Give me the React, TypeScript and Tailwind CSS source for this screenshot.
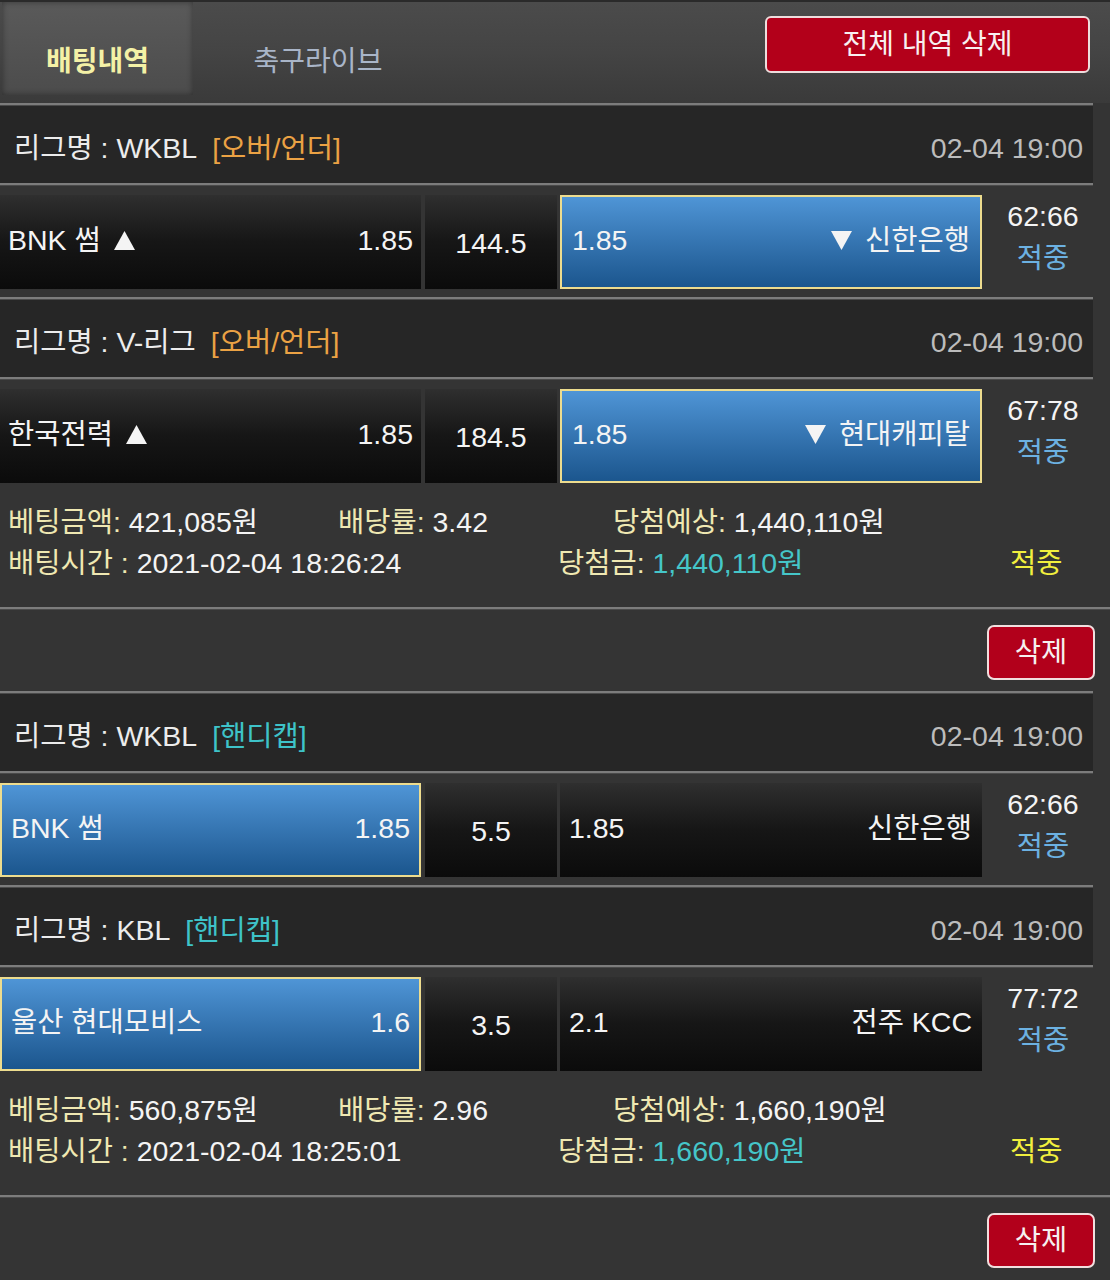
import React from "react";

type Game = {
  league: string;
  type: string;
  typeColor: string;
  date: string;
  home: string;
  homeMark?: boolean;
  homeOdds: string;
  line: string;
  awayOdds: string;
  away: string;
  awayMark?: boolean;
  pick: "home" | "away";
  score: string;
};

type Bet = {
  games: Game[];
  amount: string;
  rate: string;
  expected: string;
  time: string;
  win: string;
};

const bets: Bet[] = [
  {
    games: [
      {
        league: "WKBL",
        type: "[오버/언더]",
        typeColor: "text-[#eba244]",
        date: "02-04 19:00",
        home: "BNK 썸",
        homeMark: true,
        homeOdds: "1.85",
        line: "144.5",
        awayOdds: "1.85",
        away: "신한은행",
        awayMark: true,
        pick: "away",
        score: "62:66",
      },
      {
        league: "V-리그",
        type: "[오버/언더]",
        typeColor: "text-[#eba244]",
        date: "02-04 19:00",
        home: "한국전력",
        homeMark: true,
        homeOdds: "1.85",
        line: "184.5",
        awayOdds: "1.85",
        away: "현대캐피탈",
        awayMark: true,
        pick: "away",
        score: "67:78",
      },
    ],
    amount: "421,085원",
    rate: "3.42",
    expected: "1,440,110원",
    time: "2021-02-04 18:26:24",
    win: "1,440,110원",
  },
  {
    games: [
      {
        league: "WKBL",
        type: "[핸디캡]",
        typeColor: "text-[#3ec3c9]",
        date: "02-04 19:00",
        home: "BNK 썸",
        homeOdds: "1.85",
        line: "5.5",
        awayOdds: "1.85",
        away: "신한은행",
        pick: "home",
        score: "62:66",
      },
      {
        league: "KBL",
        type: "[핸디캡]",
        typeColor: "text-[#3ec3c9]",
        date: "02-04 19:00",
        home: "울산 현대모비스",
        homeOdds: "1.6",
        line: "3.5",
        awayOdds: "2.1",
        away: "전주 KCC",
        pick: "home",
        score: "77:72",
      },
    ],
    amount: "560,875원",
    rate: "2.96",
    expected: "1,660,190원",
    time: "2021-02-04 18:25:01",
    win: "1,660,190원",
  },
];

const dark = "bg-linear-to-b from-[#2f2f2f] via-[#161616] to-[#0b0b0b]";
const blue = "bg-linear-to-b from-[#4f95d6] to-[#1b568e] border-2 border-[#eddc8e]";

function Tri({ down }: { down?: boolean }) {
  return (
    <svg width="21" height="19" viewBox="0 0 21 19" className="shrink-0">
      <path d={down ? "M0 0H21L10.5 19Z" : "M10.5 0L21 19H0Z"} fill="#f4f4f4" />
    </svg>
  );
}

function Divider() {
  return <div className="h-[3px] w-[1093px] bg-[#7c7c7c] border-b border-[#4a4a4a]" />;
}

function GameRows({ game }: { game: Game }) {
  const homeSel = game.pick === "home";
  return (
    <>
      <Divider />
      <div className="flex h-[77px] w-[1093px] items-center justify-between bg-[#262626] pl-[14px] pr-[10px] pt-[8px]">
        <div className="flex items-center">
          <span className="text-[#ececec]">리그명 : {game.league}</span>
          <span className={`ml-[15px] ${game.typeColor}`}>{game.type}</span>
        </div>
        <span className="text-[#bcbcbc]">{game.date}</span>
      </div>
      <Divider />
      <div className="flex w-[1093px] bg-[#343434] pt-[9px] pb-[8px]">
        <div
          className={`flex h-[94px] w-[421px] items-center justify-between pb-[3px] ${
            homeSel ? `${blue} pl-[9px] pr-[9px]` : `${dark} pl-[8px] pr-[8px]`
          }`}
        >
          <span className="flex items-center gap-[13px]">
            <span>{game.home}</span>
            {game.homeMark && <Tri />}
          </span>
          <span>{game.homeOdds}</span>
        </div>
        <div className={`ml-[4px] flex h-[94px] w-[132px] items-center justify-center pt-[2px] ${dark}`}>
          {game.line}
        </div>
        <div
          className={`ml-[3px] flex h-[94px] w-[422px] items-center justify-between pb-[3px] ${
            homeSel ? `${dark} pl-[9px] pr-[10px]` : `${blue} pl-[10px] pr-[10px]`
          }`}
        >
          <span>{game.awayOdds}</span>
          <span className="flex items-center gap-[13px]">
            {game.awayMark && <Tri down />}
            <span>{game.away}</span>
          </span>
        </div>
        <div className="flex w-[111px] flex-col items-center pl-[11px] leading-[42px]">
          <span>{game.score}</span>
          <span className="text-[#6cb1e2]">적중</span>
        </div>
      </div>
    </>
  );
}

function BetBlock({ bet }: { bet: Bet }) {
  const label = "text-[#efe8b2]";
  return (
    <div>
      {bet.games.map((g, i) => (
        <GameRows key={i} game={g} />
      ))}
      <div className="pt-[11px] pb-[23px] pl-[8px] leading-[41px]">
        <div className="flex">
          <div className="w-[330px]">
            <span className={label}>베팅금액:</span> {bet.amount}
          </div>
          <div className="w-[275px]">
            <span className={label}>배당률:</span> {bet.rate}
          </div>
          <div>
            <span className={label}>당첨예상:</span> {bet.expected}
          </div>
        </div>
        <div className="flex">
          <div className="w-[550px]">
            <span className={label}>배팅시간 :</span> {bet.time}
          </div>
          <div className="w-[452px]">
            <span className={label}>당첨금:</span>{" "}
            <span className="text-[#45c6c9]">{bet.win}</span>
          </div>
          <div className="text-[#f1ef3e]">적중</div>
        </div>
      </div>
      <div className="h-[3px] w-full bg-[#7c7c7c] border-b border-[#4a4a4a]" />
      <div className="flex h-[81px] justify-end pt-[15px] pr-[15px]">
        <button className="h-[55px] w-[108px] rounded-[7px] border-2 border-[#f1dede] bg-[#b2001b] text-[#f6f0f0] leading-none">
          삭제
        </button>
      </div>
    </div>
  );
}

export default function App() {
  return (
    <div className="min-h-[1280px] w-[1110px] overflow-hidden bg-[#343434] text-[28.5px] text-[#f4f4f4] font-[family-name:'Liberation_Sans','Noto_Sans_CJK_KR',sans-serif]">
      <div className="h-[103px] border-t-2 border-[#2a2a2a] bg-linear-to-b from-[#4b4b4b] via-[#444444] to-[#3a3a3a]">
        <div className="flex h-[93px] items-start">
          <div className="ml-[2px] flex h-[93px] w-[191px] items-start justify-center bg-linear-to-b from-[#5a5a5a] to-[#4c4c4c] pt-[38px] shadow-[inset_0_0_6px_rgba(0,0,0,0.4)]">
            <span className="text-[28px] font-bold leading-[44px] text-[#f4f1a6]">배팅내역</span>
          </div>
          <div className="flex w-[250px] items-start justify-center pt-[38px]">
            <span className="text-[28px] leading-[44px] text-[#a9b5c8]">축구라이브</span>
          </div>
          <div className="flex flex-1 justify-end pt-[14px] pr-[20px]">
            <button className="h-[57px] w-[325px] rounded-[6px] border-2 border-[#eedddd] bg-[#b3001a] text-[28px] leading-none text-[#f8f0f0]">
              전체 내역 삭제
            </button>
          </div>
        </div>
      </div>
      {bets.map((b, i) => (
        <BetBlock key={i} bet={b} />
      ))}
    </div>
  );
}
